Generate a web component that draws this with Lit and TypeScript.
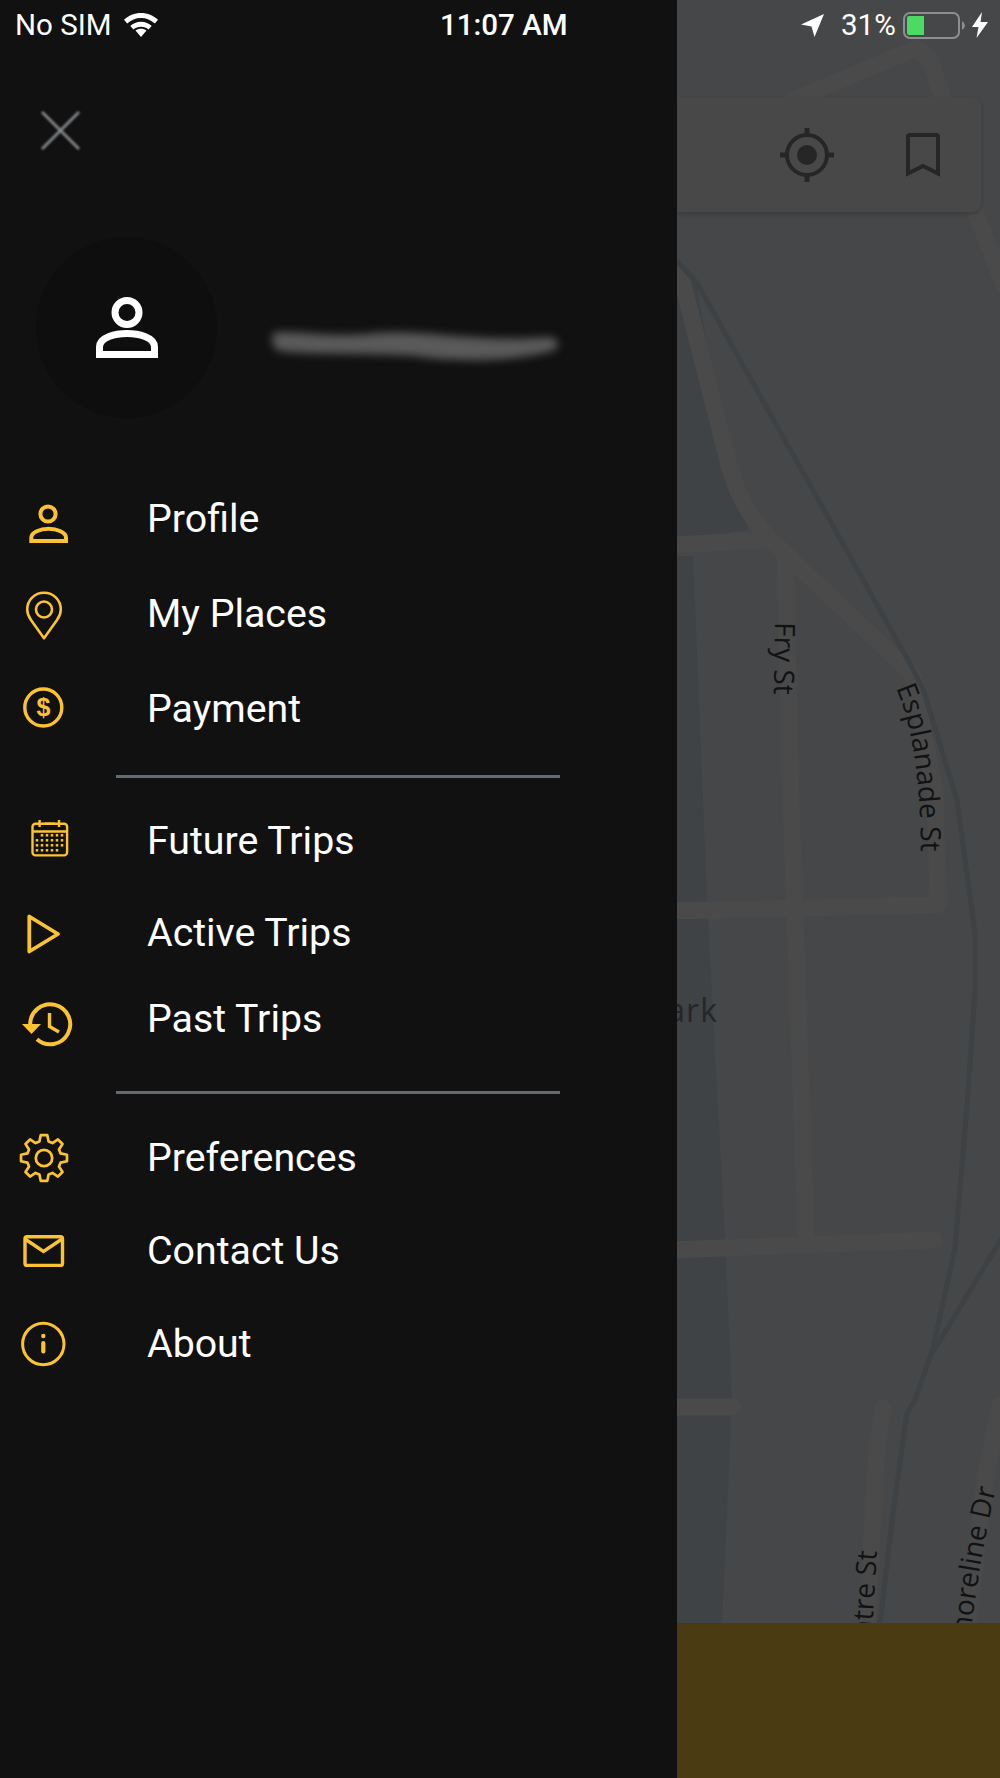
import { LitElement, html, css, svg } from "lit";
import { customElement } from "lit/decorators.js";

const gearPath = (() => {
  const cx = 44, cy = 32, R = 23.2, r = 17.2, pts: string[] = [];
  for (let i = 0; i < 8; i++) {
    const a = -Math.PI / 2 + (i * Math.PI) / 4;
    for (const [d, rad] of [[-0.27, r], [-0.14, R], [0.14, R], [0.27, r]] as [number, number][]) {
      pts.push(`${(cx + rad * Math.cos(a + d)).toFixed(2)} ${(cy + rad * Math.sin(a + d)).toFixed(2)}`);
    }
  }
  return "M" + pts.join("L") + "Z";
})();

const calDots = (() => {
  const out: [number, number][] = [];
  const cols = [37, 42, 47, 52, 57, 62];
  [25.3, 30.3, 35.3, 40.3].forEach((y, ri) => {
    cols.forEach((x, ci) => {
      if ((ri === 0 && ci === 0) || (ri === 3 && ci === 5)) return;
      out.push([x, y]);
    });
  });
  return out;
})();

const icons: Record<string, unknown> = {
  person: svg`<circle cx="48" cy="27" r="7.6" fill="none" stroke-width="4"/><path d="M31.3 54H66V50.500C66 45.500 57 41.700 48.600 41.700C40 41.700 31.300 45.500 31.300 50.500Z" fill="none" stroke-width="4"/>`,
  pin: svg`<path d="M44 56.2L31 38C28.5 34.5 27.2 31 27.2 27.5C27.2 18 34.5 10.8 44 10.8C53.5 10.8 60.8 18 60.8 27.500C60.8 31 59.5 34.500 57 38Z" fill="none" stroke-width="2.6" stroke-linejoin="round"/><circle cx="44" cy="27.500" r="8" fill="none" stroke-width="2.6"/>`,
  pay: svg`<circle cx="43.300" cy="30.500" r="18.500" fill="none" stroke-width="3.400"/><text class="dollar" x="43.500" y="39" text-anchor="middle">$</text>`,
  calendar: svg`<rect x="32.5" y="13.8" width="34.6" height="31.6" rx="3" fill="none" stroke-width="2.4"/><path d="M33 21.5H67M39.6 10V17M59 10V17M44.5 13.7H55" fill="none" stroke-width="2.4"/>${calDots.map(([x, y]) => svg`<rect class="solid" x="${x - 1.25}" y="${y - 1.25}" width="2.5" height="2.5"/>`)}`,
  play: svg`<path d="M29.3 14.5V49.5L58 32Z" fill="none" stroke-width="3.8" stroke-linejoin="round"/>`,
  history: svg`<path d="M30.2 36A20 20 0 1 1 37 51.3" fill="none" stroke-width="4"/><path class="solid" d="M22 36H41L31.5 46Z"/><path d="M49.5 25V38.5L59 44" fill="none" stroke-width="3.4"/>`,
  gear: svg`<path d="${gearPath}" fill="none" stroke-width="2.7" stroke-linejoin="round"/><circle cx="44" cy="32" r="8.2" fill="none" stroke-width="2.8"/>`,
  mail: svg`<rect x="25" y="17.8" width="37.5" height="28.6" rx="2" fill="none" stroke-width="3.4" stroke-linejoin="round"/><path d="M25 20L43.5 32.5L62 20" fill="none" stroke-width="3.4"/>`,
  info: svg`<circle cx="43.3" cy="32" r="20.7" fill="none" stroke-width="3"/><circle class="solid" cx="43.3" cy="24" r="2.2"/><path d="M43.3 31V39.5" fill="none" stroke-width="4.2" stroke-linecap="round"/>`,
};

const groups = [
  [
    { icon: "person", label: "Profile", h: 95 },
    { icon: "pin", label: "My Places", h: 95 },
    { icon: "pay", label: "Payment", h: 95 },
  ],
  [
    { icon: "calendar", label: "Future Trips", h: 92 },
    { icon: "play", label: "Active Trips", h: 92 },
    { icon: "history", label: "Past Trips", h: 80 },
  ],
  [
    { icon: "gear", label: "Preferences", h: 93 },
    { icon: "mail", label: "Contact Us", h: 93 },
    { icon: "info", label: "About", h: 93 },
  ],
];

@customElement("app-root")
export class AppRoot extends LitElement {
  static styles = css`
    :host {
      display: block;
      position: relative;
      width: 1000px;
      height: 1778px;
      overflow: hidden;
      font-family: Roboto, "Liberation Sans", sans-serif;
    }
    .layout { display: flex; width: 1000px; height: 1778px; }
    .status {
      position: absolute;
      inset: 0 0 auto 0;
      height: 50px;
      display: flex;
      align-items: center;
      color: #fff;
      font-size: 29.5px;
    }
    .status-left { width: 440px; padding-left: 15px; box-sizing: border-box; display: flex; align-items: center; gap: 13px; }
    .time { width: 361px; font-weight: 500; }
    .status-right { display: flex; align-items: center; }
    .pct { margin-left: 17px; width: 62px; }
    .drawer {
      width: 677px;
      flex: none;
      background: #111112;
      display: flex;
      flex-direction: column;
    }
    .close { display: block; margin: 110px 0 0 40px; width: 41px; height: 41px; filter: blur(0.9px); }
    .head { display: flex; align-items: center; margin: 86px 0 0 36px; height: 181px; }
    .avatar {
      width: 181px; height: 181px; border-radius: 50%;
      background: #0e0e0f;
      display: flex; align-items: center; justify-content: center;
      flex: none;
    }
    .name { display: block; margin: 36px 0 0 49px; filter: blur(4px); }
    nav { margin-top: 51.5px; display: flex; flex-direction: column; }
    .row { display: flex; align-items: center; }
    .ico { width: 147px; flex: none; display: flex; }
    .ico svg { display: block; stroke: #fcc331; }
    .ico .solid { fill: #fcc331; stroke: none; }
    .ico .dollar { fill: #fcc331; stroke: none; font: 700 25px "Liberation Sans", sans-serif; }
    .label { color: #fff; font-size: 39.3px; margin-top: 3px; }
    .rule { height: 3px; background: #5f6d73; width: 444px; margin-left: 116px; }
    .rule.first { margin-top: 20px; margin-bottom: 16px; }
    .rule.second { margin-top: 33px; margin-bottom: 16px; }
    .right { flex: 1; display: flex; flex-direction: column; min-width: 0; }
    .map { position: relative; flex: 1; background: #464749; overflow: hidden; }
    .map > svg { display: block; width: 323px; height: 1623px; }
    .road { fill: none; stroke: #4a4a4a; stroke-width: 17; stroke-linecap: round; stroke-linejoin: round; }
    .rail { fill: none; stroke: #3e4244; stroke-width: 5; stroke-linejoin: round; }
    .water { fill: #3f4346; }
    .streets text { font: 28px "Open Sans", sans-serif; fill: #111213; }
    .streets text.park { font-size: 32px; fill: #262626; letter-spacing: 1px; }
    .search {
      position: absolute;
      left: 0; top: 97px;
      width: 304px; height: 115px;
      background: #484848;
      border-radius: 0 9px 9px 0;
      box-shadow: 0 2px 4px rgba(0,0,0,0.18);
      display: flex;
      align-items: center;
    }
    .search svg { display: block; }
    .target { margin-left: 103px; }
    .bookmark { margin-left: 72px; }
    .bottom { height: 155px; flex: none; background: #4b3b12; }
  `;

  render() {
    return html`
      <div class="layout">
        <aside class="drawer">
          <svg class="close" viewBox="0 0 41 41" fill="none" stroke="#878b8c" stroke-width="2.8">
            <path d="M2 2L39 39M39 2L2 39" />
          </svg>
          <div class="head">
            <div class="avatar">
              <svg width="62" height="61" viewBox="0 0 62 61" fill="none" stroke="#fff" stroke-width="7">
                <circle cx="31" cy="15.5" r="12" />
                <path d="M3.5 57.5H58.500V50C58.500 40 42 36.500 31 36.500C20 36.500 3.500 40 3.500 50Z" />
              </svg>
            </div>
            <svg class="name" width="310" height="50" viewBox="0 0 310 50">
              <path d="M8 12C30 8 60 18 110 12C160 8 210 22 280 16C294 16 296 26 286 30C250 40 190 42 150 35C100 32 40 34 14 30C6 28 4 16 8 12Z" fill="#5a5a5a" />
            </svg>
          </div>
          <nav>
            ${groups.map(
              (g, i) => html`
                ${g.map(
                  (it) => html`
                    <div class="row" style="height:${it.h}px">
                      <div class="ico">
                        <svg width="80" height="60" viewBox="0 0 80 60">${icons[it.icon]}</svg>
                      </div>
                      <div class="label">${it.label}</div>
                    </div>
                  `,
                )}
                ${i === 0 ? html`<div class="rule first"></div>` : i === 1 ? html`<div class="rule second"></div>` : ""}
              `,
            )}
          </nav>
        </aside>
        <div class="right">
          <div class="map">
            <svg viewBox="677 0 323 1623">
              <path class="water" d="M677 277L695 277L726 453L748 530L677 540Z" />
              <path class="water" d="M677 556L693 556L703 800L707 901L725 1239L732 1400L722 1623L677 1623Z" />
              <path class="road" d="M793 100L917 48L930 60L943 100" />
              <path class="road" d="M975 212L1010 300" />
              <path class="road" d="M680 272L726 453C733 485 745 512 771 540L913 675L935 794L938 905" />
              <path class="road" d="M670 545L771 540" />
              <path class="road" d="M785 556L791 800L806 1237" />
              <path class="road" d="M670 911L938 905" />
              <path class="road" d="M670 1250L935 1240" />
              <path class="road" d="M670 1407L733 1407" />
              <path class="road" d="M883 1408L877 1447L866 1640" />
              <path class="road" d="M1000 1405L985 1480L966 1640" />
              <path class="rail" d="M677 261L697 283L913 669L923 689L957 800L975 934L975 992L967 1106L955 1248L933 1348L915 1400L907 1413L893 1513L880 1623" />
              <path class="rail" d="M1003 1236L933 1352" />
              <g class="streets">
                <defs>
                  <path id="esp" d="M896 688Q921 745 921 860" />
                  <path id="sho" d="M964 1695Q975 1575 996 1489" />
                  <path id="cen" d="M868 1695L877 1551" />
                </defs>
                <text transform="translate(775 622) rotate(91)">Fry St</text>
                <text><textPath href="#esp">Esplanade St</textPath></text>
                <text text-anchor="end"><textPath href="#sho" startOffset="100%">Shoreline Dr</textPath></text>
                <text text-anchor="end"><textPath href="#cen" startOffset="100%">Centre St</textPath></text>
                <text class="park" x="718" y="1022" text-anchor="end">Park</text>
              </g>
            </svg>
            <div class="search">
              <svg class="target" width="54" height="54" viewBox="0 0 54 54" fill="none" stroke="#262626">
                <circle cx="27" cy="27" r="20" stroke-width="4" />
                <circle cx="27" cy="27" r="10" fill="#262626" stroke="none" />
                <path d="M27 0V8M27 46V54M0 27H8M46 27H54" stroke-width="5" />
              </svg>
              <svg class="bookmark" width="34" height="44" viewBox="0 0 34 44" fill="none" stroke="#262626" stroke-width="4">
                <path d="M2 40.500V3.500Q2 2 3.500 2H30.500Q32 2 32 3.500V40.500L17 33Z" />
              </svg>
            </div>
          </div>
          <div class="bottom"></div>
        </div>
      </div>
      <div class="status">
        <div class="status-left">
          <span>No SIM</span>
          <svg width="34" height="24" viewBox="0 0 34 24" fill="#fff">
            <path d="M17 24L11.500 17.600C14.500 15 19.500 15 22.500 17.600Z" />
            <path d="M17 8.800C21.300 8.800 25 10.500 27.700 13L24.500 16.500C22.500 14.700 20 13.700 17 13.700C14 13.700 11.500 14.700 9.500 16.500L6.300 13C9 10.500 12.700 8.800 17 8.800Z" />
            <path d="M17 0C23.500 0 29.500 2.500 34 6.800L30.800 10.500C27 7 22.300 5 17 5C11.700 5 7 7 3.200 10.500L0 6.800C4.500 2.500 10.500 0 17 0Z" />
          </svg>
        </div>
        <div class="time">11:07 AM</div>
        <div class="status-right">
          <svg width="23" height="23" viewBox="0 0 23 23" fill="#fff"><path d="M23 0L13.500 23L10.500 12.500L0 10.500Z" /></svg>
          <span class="pct">31%</span>
          <svg width="64" height="28" viewBox="0 0 64 28">
            <rect x="1" y="2" width="55" height="25" rx="6" fill="none" stroke="#8d8f90" stroke-width="2" />
            <path d="M6 5H21V24H6Q4 24 4 22V7Q4 5 6 5Z" fill="#4cd964" />
            <path d="M59 10Q62 12 62 14.500Q62 17 59 19Z" fill="#8d8f90" />
          </svg>
          <svg style="margin-left:5px" width="16" height="26" viewBox="0 0 16 26" fill="#fff"><path d="M10 0L0 15H6.500L4.500 26L16 10H8.500Z" /></svg>
        </div>
      </div>
    `;
  }
}
